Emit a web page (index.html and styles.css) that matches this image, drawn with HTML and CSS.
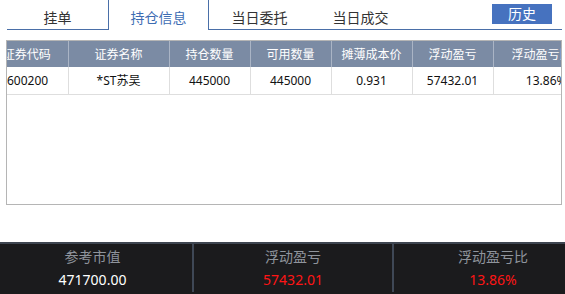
FILE: index.html
```html
<!DOCTYPE html>
<html lang="zh-CN">
<head>
    <meta charset="UTF-8">
    <meta name="viewport" content="width=device-width, initial-scale=1.0">
    <title>持仓信息</title>
    <link rel="stylesheet" href="styles.css">
</head>
<body>
    <div class="tabbar">
        <div class="tab">挂单</div>
        <div class="tab active">持仓信息</div>
        <div class="tab">当日委托</div>
        <div class="tab">当日成交</div>
        <button class="history-btn">历史</button>
    </div>

    <div class="grid-box">
        <table class="positions">
            <colgroup>
                <col class="c-code">
                <col class="c-name">
                <col class="c-num">
                <col class="c-num">
                <col class="c-num">
                <col class="c-num">
                <col class="c-pct">
            </colgroup>
            <thead>
                <tr>
                    <th>证券代码</th>
                    <th>证券名称</th>
                    <th>持仓数量</th>
                    <th>可用数量</th>
                    <th>摊薄成本价</th>
                    <th>浮动盈亏</th>
                    <th class="pct">浮动盈亏比</th>
                </tr>
            </thead>
            <tbody>
                <tr>
                    <td class="code">600200</td>
                    <td>*ST苏吴</td>
                    <td>445000</td>
                    <td>445000</td>
                    <td>0.931</td>
                    <td>57432.01</td>
                    <td class="pct">13.86%</td>
                </tr>
            </tbody>
        </table>
    </div>

    <div class="summary">
        <div class="summary-item">
            <div class="label">参考市值</div>
            <div class="value">471700.00</div>
        </div>
        <div class="summary-item">
            <div class="label">浮动盈亏</div>
            <div class="value up">57432.01</div>
        </div>
        <div class="summary-item">
            <div class="label">浮动盈亏比</div>
            <div class="value up">13.86%</div>
        </div>
    </div>
</body>
</html>
```

FILE: styles.css
```css
* {
    margin: 0;
    padding: 0;
    box-sizing: border-box;
}

body {
    font-family: "Noto Sans", "Noto Sans CJK SC", sans-serif;
    background: #fff;
    color: #222;
    width: 565px;
    height: 294px;
    overflow: hidden;
    display: flex;
    flex-direction: column;
}

/* tabs */
.tabbar {
    display: flex;
    height: 30px;
    margin: 0 3px 0 7px;
    border-bottom: 1px solid #4a6fa8;
}

.tab {
    width: 101px;
    font-size: 14px;
    line-height: 29px;
    padding-top: 3px;
    text-align: center;
    color: #333;
}

.tab.active {
    color: #3d6cb3;
    background: #fff;
    border-left: 1px solid #4a6fa8;
    border-right: 1px solid #4a6fa8;
    height: 30px;
    margin-bottom: -1px;
}

.history-btn {
    margin: 4px 10px 0 auto;
    width: 60px;
    height: 20px;
    border: none;
    background: #4672bf;
    color: #fff;
    font-family: inherit;
    font-size: 14px;
    line-height: 20px;
}

/* positions grid */
.grid-box {
    margin: 10px 3px 0 6px;
    height: 165px;
    border: 1px solid #b5b5b5;
    overflow: hidden;
}

.positions {
    border-collapse: collapse;
    table-layout: fixed;
    width: 590px;
    margin-left: -21px;
}

.c-code { width: 82px; }
.c-name { width: 101px; }
.c-num { width: 81px; }
.c-pct { width: 83px; }

.positions th {
    height: 26px;
    background: #7b8ba4;
    color: #fff;
    font-size: 12px;
    font-weight: normal;
    text-align: center;
    white-space: nowrap;
    border-right: 1px solid #aab4c5;
}

.positions td {
    height: 27px;
    font-size: 12px;
    color: #111;
    text-align: center;
    white-space: nowrap;
    border-right: 1px solid #dedede;
    border-bottom: 1px solid #dedede;
}

.positions td.code {
    text-align: left;
    padding-left: 21px;
}

.positions .pct {
    text-align: right;
}

.positions th.pct {
    padding-right: 4px;
}

.positions td.pct {
    padding-right: 9px;
}

/* bottom summary */
.summary {
    margin-top: auto;
    margin-left: -7px;
    width: 600px;
    height: 52px;
    background: #1b1b1d;
    border-top: 2px solid #3e4550;
    display: grid;
    grid-template-columns: 199px 200px 200px;
    padding-bottom: 2px;
}

.summary-item {
    text-align: center;
    padding-top: 3px;
}

.summary-item + .summary-item {
    border-left: 2px solid #3f4856;
}

.summary .label {
    font-size: 14px;
    line-height: 20px;
    color: #8f949c;
}

.summary .value {
    margin-top: 3px;
    font-size: 14px;
    line-height: 20px;
    color: #fff;
}

.summary .value.up {
    color: #ff1515;
}
```
